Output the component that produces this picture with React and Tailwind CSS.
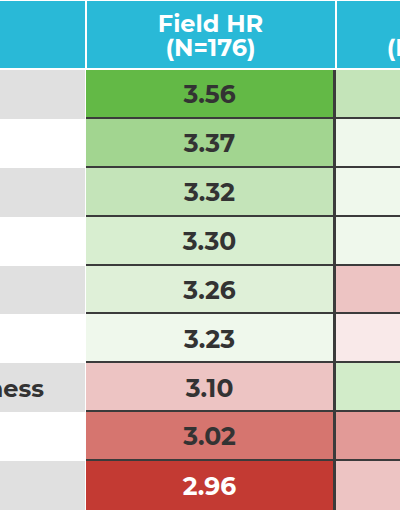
import React from "react";

const rows = [
  { label: "", shade: true, a: "3.56", aBg: "bg-[#63b946]", b: "3.41", bBg: "bg-[#c4e4b9]" },
  { label: "", shade: false, a: "3.37", aBg: "bg-[#a2d590]", b: "3.28", bBg: "bg-[#eff8ec]" },
  { label: "", shade: true, a: "3.32", aBg: "bg-[#c4e4b9]", b: "3.27", bBg: "bg-[#eff8ec]" },
  { label: "", shade: false, a: "3.30", aBg: "bg-[#d8eed0]", b: "3.26", bBg: "bg-[#eff8ec]" },
  { label: "", shade: true, a: "3.26", aBg: "bg-[#dff0d8]", b: "3.12", bBg: "bg-[#edc4c3]" },
  { label: "", shade: false, a: "3.23", aBg: "bg-[#eff8ec]", b: "3.20", bBg: "bg-[#f9e9e9]" },
  { label: "Responsiveness", shade: true, a: "3.10", aBg: "bg-[#edc4c3]", b: "3.33", bBg: "bg-[#d2ecc9]" },
  { label: "", shade: false, a: "3.02", aBg: "bg-[#d6756f]", b: "3.05", bBg: "bg-[#e29a97]" },
  { label: "", shade: true, a: "2.96", aBg: "bg-[#c33a33]", b: "3.11", bBg: "bg-[#edc4c3]", light: true },
];

export default function App() {
  return (
    <div className="w-[400px] h-[516px] overflow-hidden bg-white" style={{ fontFamily: "Montserrat, 'Open Sans', 'Liberation Sans', sans-serif" }}>
      <div className="w-[540px] flex flex-col">
        {/* header */}
        <div className="flex h-[70px] pt-[1px] border-b-2 border-white bg-white">
          <div className="w-[85px] bg-[#29b9d7]" />
          <div className="w-[248px] ml-[1.5px] bg-[#29b9d7] flex flex-col items-center justify-center pt-[3px] text-white font-bold text-[24px] leading-[24px]">
            <span>Field HR</span>
            <span>(N=176)</span>
          </div>
          <div className="flex-1 ml-[2px] bg-[#29b9d7] flex flex-col items-center justify-center pt-[3px] text-white font-bold text-[24px] leading-[24px] pr-[12px]">
            <span>HQ</span>
            <span>(N=142)</span>
          </div>
        </div>

        {rows.map((r, i) => {
          const last = i === rows.length - 1;
          const line = last ? "" : "border-b-[2.5px] border-[#3b3b3b]";
          return (
            <div key={i} className="flex h-[48.9px]">
              <div className={`w-[85px] mr-[1px] overflow-hidden flex items-center justify-end pr-[41px] pt-[3px] text-[24px] font-bold text-[#333333] ${r.shade ? "bg-[#e0e0e0]" : "bg-white"}`}>
                <span className="whitespace-nowrap">{r.label}</span>
              </div>
              <div className={`w-[247px] flex items-center justify-center pt-[3px] text-[25px] font-bold ${r.light ? "text-white" : "text-[#333333]"} ${r.aBg} ${line}`}>
                {r.a}
              </div>
              <div className="w-[2.5px] bg-[#3b3b3b]" />
              <div className={`flex-1 flex items-center justify-center pt-[3px] pr-[8px] text-[25px] font-bold text-[#333333] ${r.bBg} ${line}`}>
                {r.b}
              </div>
            </div>
          );
        })}
      </div>
    </div>
  );
}
